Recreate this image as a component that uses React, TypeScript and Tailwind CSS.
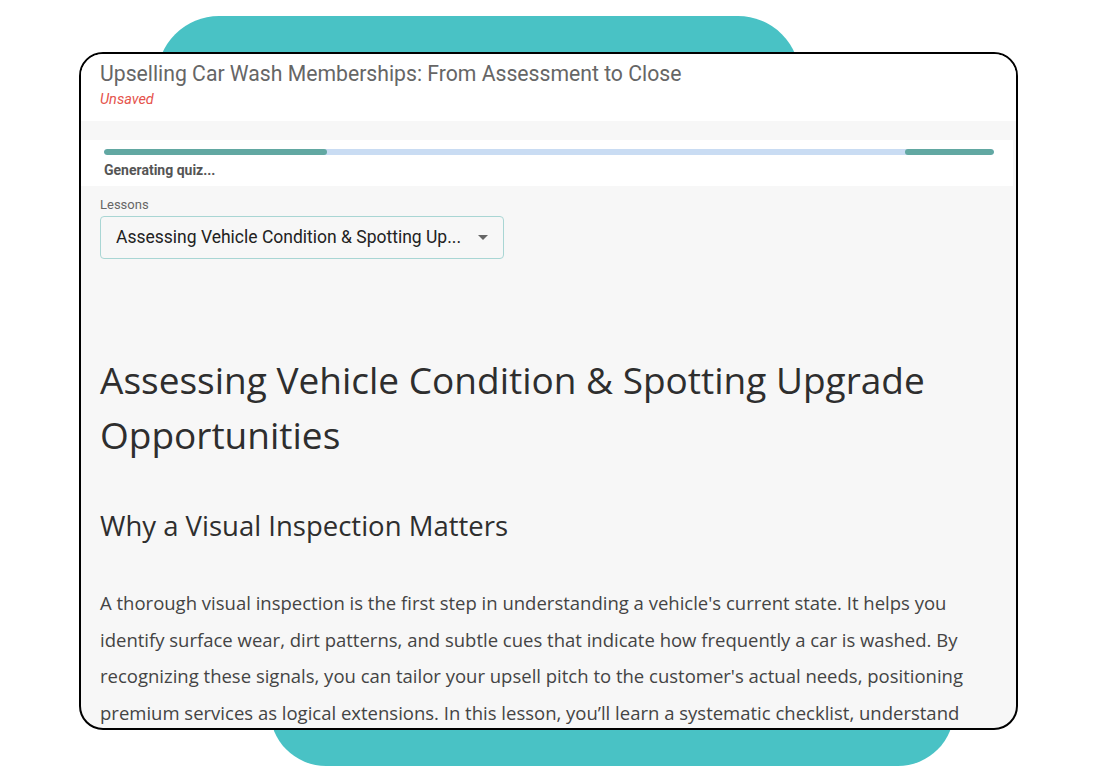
import React from 'react';

const Blob = ({ className }: { className: string }) => (
    <div className={`absolute bg-[#49c2c5] ${className}`} />
);

const ProgressBar = () => (
    <div className="relative h-[6px] w-full rounded-full bg-[#c9dcf3] overflow-hidden">
        <div className="absolute left-0 top-0 h-full w-[223px] rounded-full bg-[#62a8a2]" />
        <div className="absolute right-0 top-0 h-full w-[89px] rounded-full bg-[#62a8a2]" />
    </div>
);

const LessonSelect = () => (
    <div className="flex flex-col">
        <span className="text-[13px] leading-[16px] text-[#666] mb-[3px]">Lessons</span>
        <div className="flex items-center justify-between w-[404px] h-[43px] rounded-[4px] border border-[#a9d6d4] bg-[#f7f7f7] pl-[15px] pr-[15px]">
            <span className="text-[17.5px] text-[#222] truncate">Assessing Vehicle Condition &amp; Spotting Up...</span>
            <svg width="10" height="5" viewBox="0 0 10 5" className="shrink-0">
                <path d="M0 0 L10 0 L5 5 Z" fill="#666" />
            </svg>
        </div>
    </div>
);

export default function App() {
    return (
        <div className="relative w-[1110px] h-[782px] bg-white overflow-hidden font-['Roboto',sans-serif]">
            <Blob className="left-[157px] top-[16px] w-[643px] h-[200px] rounded-[62px]" />
            <Blob className="left-[270px] top-[600px] w-[684px] h-[166px] rounded-[56px]" />

            <div className="relative ml-[79px] mt-[52px] w-[939px] h-[678px] rounded-[24px] border-2 border-black bg-[#f7f7f7] overflow-hidden flex flex-col">
                {/* header */}
                <div className="bg-white h-[67px] pl-[19px] pt-[6px] shrink-0">
                    <div className="text-[21.2px] leading-[28px] text-[#666]">
                        Upselling Car Wash Memberships: From Assessment to Close
                    </div>
                    <div className="text-[14.5px] leading-[18px] italic text-[#e5534b] mt-[3px]">Unsaved</div>
                </div>

                <div className="h-[19px] shrink-0" />

                {/* generation status */}
                <div className="bg-white mr-[3px] h-[46px] pl-[23px] pr-[19px] pt-[9px] shrink-0">
                    <ProgressBar />
                    <div className="text-[14px] leading-[18px] font-bold text-[#555] mt-[6px]">Generating quiz...</div>
                </div>

                {/* lesson content */}
                <div className="pl-[19px] pr-[40px] pt-[11px] font-['Open_Sans',sans-serif]">
                    <div className="font-['Roboto',sans-serif]">
                        <LessonSelect />
                    </div>

                    <h1 className="mt-[93px] text-[37px] leading-[55px] font-medium text-[#2e2e2e]">
                        Assessing Vehicle Condition &amp; Spotting Upgrade Opportunities
                    </h1>

                    <h2 className="mt-[45px] text-[27.5px] leading-[38px] font-medium text-[#2e2e2e]">
                        Why a Visual Inspection Matters
                    </h2>

                    <p className="mt-[40px] text-[18.5px] leading-[36.7px] text-[#444]">
                        A thorough visual inspection is the first step in understanding a vehicle's current state. It helps you
                        identify surface wear, dirt patterns, and subtle cues that indicate how frequently a car is washed. By
                        recognizing these signals, you can tailor your upsell pitch to the customer's actual needs, positioning
                        premium services as logical extensions. In this lesson, you’ll learn a systematic checklist, understand
                        how to read the signs each vehicle shows you.
                    </p>
                </div>
            </div>
        </div>
    );
}
